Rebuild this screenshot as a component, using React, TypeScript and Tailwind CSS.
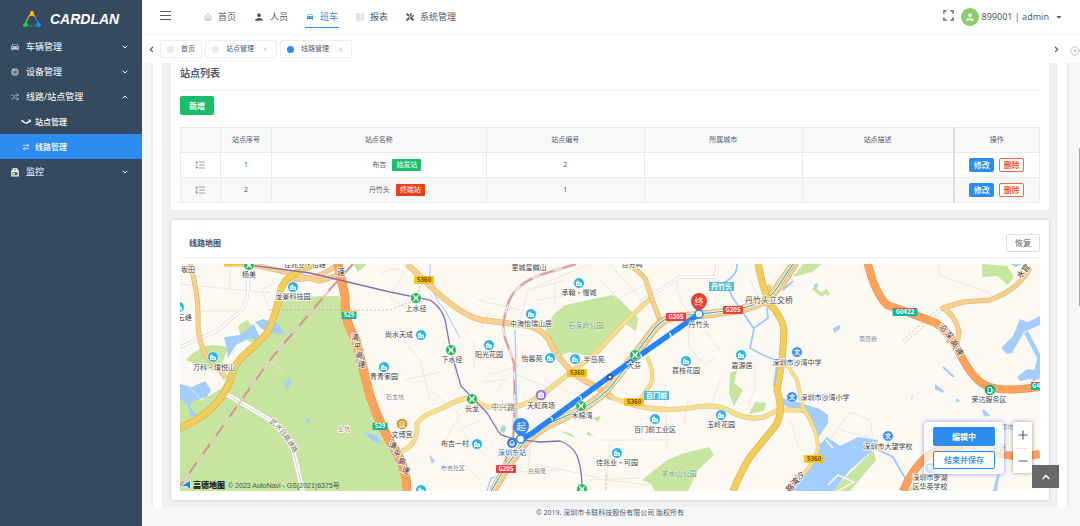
import React from "react";
import { Cpu, House, Shuffle, ArrowRightLeft, ChevronDown, ChevronUp, ChevronLeft, ChevronRight, Plus, Minus, X, CircleX } from "lucide-react";
import { IoMdCar, IoMdPerson } from "react-icons/io";
import { FaTools, FaCaretDown } from "react-icons/fa";

type Point = [number, number];

function Logo() {
  return (
    <svg viewBox="0 0 20 18" className="h-[18px] w-5" fill="none">
      <path d="M10 2 7 6 3 14" stroke="#e8a90c" strokeWidth="1.3" />
      <path d="M10 2 13 7" stroke="#e8a90c" strokeWidth="1.3" />
      <path d="M13 7 17 14" stroke="#1b8df0" strokeWidth="1.3" />
      <path d="M3 14 6 9" stroke="#1fc35b" strokeWidth="1.2" />
      <path d="M5 16H15" stroke="#28b8a0" strokeWidth=".800" strokeDasharray="2 1" />
      <circle cx="10" cy="2.500" r="1.700" fill="#f3b70e" />
      <path d="M8.500 3h3l.5 3h-4z" fill="#f3b70e" />
      <circle cx="3" cy="15" r="2" fill="#19cf55" />
      <path d="m3 17 3.500-2.500L4.500 12.500z" fill="#19cf55" />
      <circle cx="17" cy="15" r="2" fill="#1590ff" />
      <path d="m17 17-3.500-2.500 2-2z" fill="#1590ff" />
    </svg>
  );
}

function StationIcon() {
  return (
    <svg viewBox="0 0 10 6" className="h-1.5 w-2.5" fill="none" stroke="currentColor" strokeWidth="1.500">
      <path d="M.5 1.300 3.500 3.500Q5 4.500 6.500 3.600L9.500 1.500" />
      <path d="m7.500.800 2 .4-.5 2" strokeWidth="1" />
    </svg>
  );
}

function MonitorIcon() {
  return (
    <svg viewBox="0 0 16 16" className="size-2.5" fill="currentColor">
      <path d="M4 5V2h8v3h2v10H2V5zm2-1v1h4V4zM4 8v5h8V8z" />
      <path d="M5 9h3v3H5zM9 9h2v1H9z" />
    </svg>
  );
}

function ReportIcon() {
  return (
    <svg viewBox="0 0 8 8" className="size-2" fill="none" stroke="#c5c8ce" strokeWidth=".700">
      <path d="M.5.700h7v6.600h-7zM.5 2.900h7M.5 5.100h7M2.800.700v6.600" />
    </svg>
  );
}

function SortIcon() {
  return (
    <svg viewBox="0 0 10 8" className="mx-auto h-2 w-2.5 -translate-x-px" fill="none" stroke="#808695" strokeWidth=".800">
      <path d="M1.800.800v6.400M.4 2 1.800.600 3.200 2M.4 6 1.800 7.400 3.200 6M4 1H10M4 4H10M4 7H10" />
    </svg>
  );
}

function FullscreenIcon() {
  return (
    <svg viewBox="0 0 12 12" className="h-[11px] w-[11px]" fill="none" stroke="currentColor" strokeWidth="1.500">
      <path d="M1 4V1h3M8 1h3v3M11 8v3H8M4 11H1V8" />
    </svg>
  );
}

type MenuItem = { label: string; icon: React.ReactNode; open?: boolean };

function MenuRow({ label, icon, open }: MenuItem) {
  return (
    <button type="button" aria-expanded={!!open} className="flex h-[25px] w-full items-center pr-[13px] pl-2.5 text-left text-[9px]">
      <span className="flex w-4 shrink-0">{icon}</span>
      <span className="flex-1">{label}</span>
      {open ? <ChevronUp className="size-2" strokeWidth={3} /> : <ChevronDown className="size-2" strokeWidth={3} />}
    </button>
  );
}

function Sidebar() {
  return (
    <aside className="w-[142px] shrink-0 bg-[#364a5f] text-white">
      <div className="flex h-[34px] items-center gap-2 pt-1 pl-[22px]">
        <Logo />
        <span className="font-['Liberation_Sans',sans-serif] text-[14px] font-bold italic">CARDLAN</span>
      </div>
      <nav>
        <MenuRow label="车辆管理" icon={<IoMdCar className="size-2.5 text-white/75" />} />
        <MenuRow label="设备管理" icon={<Cpu className="size-2.5 p-px text-white/75" />} />
        <MenuRow label="线路/站点管理" icon={<Shuffle className="size-2.5 p-px text-white/75" />} open />
        <a href="#stations" className="flex h-[25px] items-center gap-1 pl-[21px] text-[8px] font-medium">
          <StationIcon />
          站点管理
        </a>
        <a href="#lines" aria-current="page" className="flex h-[25px] items-center gap-1 bg-[#2d8cf0] pl-[21px] text-[8px] font-medium">
          <ArrowRightLeft className="size-2.5 p-px" />
          线路管理
        </a>
        <MenuRow label="监控" icon={<MonitorIcon />} />
      </nav>
    </aside>
  );
}

function Header() {
  const items = [
    { label: "首页", icon: <House className="size-2 text-[#808695]" strokeWidth={1.5} /> },
    { label: "人员", icon: <IoMdPerson className="size-2.5" /> },
    { label: "班车", icon: <IoMdCar className="size-2" />, active: true },
    { label: "报表", icon: <ReportIcon /> },
    { label: "系统管理", icon: <FaTools className="size-2" /> },
  ];
  return (
    <header className="flex h-[35px] items-center border-b border-[#f5f5f6] pr-[17px] pl-[18px]">
      <button type="button" aria-label="折叠菜单" className="-mt-1 flex w-[11px] flex-col gap-[3px]">
        <span className="h-px bg-[#515a6e]" />
        <span className="h-px bg-[#515a6e]" />
        <span className="h-px bg-[#515a6e]" />
      </button>
      <nav className="ml-8 flex gap-4 text-[9px]">
        {items.map((item) => (
          <a
            key={item.label}
            href="#nav"
            className={item.active ? "flex h-[22px] items-center gap-1.5 border-b border-[#2d8cf0] px-px text-[#2d8cf0]" : "flex h-[22px] items-center gap-1.5 border-b border-transparent px-px"}
          >
            {item.icon}
            {item.label}
          </a>
        ))}
      </nav>
      <div className="ml-auto flex items-center gap-[7px]">
        <button type="button" aria-label="全屏" className="-mt-1"><FullscreenIcon /></button>
        <button type="button" className="flex items-center gap-[3px] text-[9px]">
          <span className="flex size-[18px] items-center justify-center rounded-full bg-[#87d068] text-white">
            <IoMdPerson className="size-2.5" />
          </span>
          <span className="font-['Noto_Sans',sans-serif]">899001 | admin</span>
          <FaCaretDown className="ml-[3px] size-2" />
        </button>
      </div>
    </header>
  );
}

function PageTabs() {
  const tabs = [
    { label: "首页" },
    { label: "站点管理", closable: true },
    { label: "线路管理", closable: true, active: true },
  ];
  return (
    <div className="flex h-7 items-center text-[7px]">
      <button type="button" aria-label="向左" className="flex w-[18px] justify-center"><ChevronLeft className="size-[9px]" strokeWidth={3} /></button>
      <div className="flex flex-1 gap-[3px]">
        {tabs.map((tab) => (
          <div key={tab.label} className="flex h-[18px] items-center gap-[7px] rounded-xs border border-[#eeeff1] px-1.5">
            <span className={tab.active ? "size-[7px] rounded-full bg-[#2d8cf0]" : "size-[7px] rounded-full bg-[#e8eaec]"} />
            <a href="#tab">{tab.label}</a>
            {tab.closable && (
              <button type="button" aria-label={"关闭" + tab.label} className="px-px text-[#a0a4ac]"><X className="size-[7px]" strokeWidth={2} /></button>
            )}
          </div>
        ))}
      </div>
      <button type="button" aria-label="向右" className="flex w-5 justify-center"><ChevronRight className="size-[9px]" strokeWidth={3} /></button>
      <button type="button" aria-label="关闭标签" className="ml-1 text-[#9aa0ab]"><CircleX className="mt-1 size-[10px]" strokeWidth={1.5} /></button>
    </div>
  );
}

const stations = [
  { order: 1, name: "布吉", tag: "始发站", first: true, code: "2" },
  { order: 2, name: "丹竹头", tag: "终端站", first: false, code: "1" },
];

function StationList() {
  return (
    <section className="bg-white px-[9px] pb-[7px]">
      <h2 className="flex h-7 items-center border-b border-[#eeeff1] pb-1.5 text-[10px] font-bold text-[#515a6e]">站点列表</h2>
      <button type="button" className="mt-[5px] flex h-[19px] items-center rounded-xs bg-[#19be6b] px-[9px] text-[8px] font-bold text-white">新增</button>
      <table className="mt-3 w-full table-fixed border-collapse text-center text-[7px]">
        <colgroup>
          <col className="w-10" />
          <col className="w-[51px]" />
          <col className="w-[25%]" />
          <col className="w-[158px]" />
          <col className="w-[158px]" />
          <col />
          <col className="w-[86px]" />
        </colgroup>
        <thead>
          <tr className="h-[25px] bg-[#f8f8f9]">
            {["", "站点序号", "站点名称", "站点编号", "所属城市", "站点描述", "操作"].map((title, i) => (
              <th key={i} className={i === 6 ? "border border-l-2 border-[#e8eaec] border-l-[#dcdee2] p-0 font-normal" : "border border-[#e8eaec] p-0 font-normal"}>{title}</th>
            ))}
          </tr>
        </thead>
        <tbody>
          {stations.map((s) => (
            <tr key={s.order} className="h-[25px] even:bg-[#f8f8f9]">
              <td className="border border-[#e8eaec] p-0"><SortIcon /></td>
              <td className="border border-[#e8eaec] p-0">{s.order}</td>
              <td className="border border-[#e8eaec] p-0">
                <div className="flex items-center justify-center gap-1.5 pl-9">
                  <span>{s.name}</span>
                  <span className={s.first ? "flex h-3 items-center rounded-[1px] bg-[#19be6b] px-1 text-white" : "flex h-3 items-center rounded-[1px] bg-[#ed4014] px-1 text-white"}>{s.tag}</span>
                </div>
              </td>
              <td className="border border-[#e8eaec] p-0">{s.code}</td>
              <td className="border border-[#e8eaec] p-0" />
              <td className="border border-[#e8eaec] p-0" />
              <td className="border border-l-2 border-[#e8eaec] border-l-[#dcdee2] p-0">
                <div className="flex justify-center gap-[5px] text-[8px] font-medium">
                  <button type="button" className="h-3.5 w-[25px] rounded-[2px] bg-[#2d8cf0] text-white">修改</button>
                  <button type="button" className="h-3.5 w-[25px] rounded-[2px] border border-[#f0694a] bg-white text-[#ed4014]">删除</button>
                </div>
              </td>
            </tr>
          ))}
        </tbody>
      </table>
    </section>
  );
}

function Road({ d, color, edge, width }: { d: string; color: string; edge: string; width: number }) {
  return (
    <>
      <path d={d} stroke={edge} strokeWidth={width + 1} fill="none" strokeLinejoin="round" />
      <path d={d} stroke={color} strokeWidth={width} fill="none" strokeLinejoin="round" />
    </>
  );
}

const residences: Point[] = [[293, 287], [213, 357], [421, 335], [384, 367], [489, 345], [531, 314], [579, 283], [550, 358], [575, 359], [686, 361], [741, 355], [655, 419], [721, 415], [477, 444], [617, 453], [421, 490], [179, 307]];
const metros: Point[] = [[249, 265], [416, 298], [451, 350], [472, 399], [581, 406], [582, 489], [635, 355]];
const schools: Point[] = [[797, 352], [792, 397], [888, 436], [930, 468]];

const places: [string, number, number][] = [
  ["坂田", 188, 272], ["杨美", 249, 277], ["佳兆业·怡峰", 305, 267], ["龙景科技园", 293, 299], ["云峰", 185, 320], ["万科·璞悦山", 214, 370],
  ["上水径", 416, 311], ["尚水天成", 399, 337], ["青青家园", 384, 379], ["下水径", 452, 362], ["阳光花园", 489, 357], ["里城玺樾山", 529, 270],
  ["中海怡瑞山居", 531, 326], ["承翰·慢城", 579, 295], ["怡馨苑", 532, 361], ["半岛苑", 594, 362], ["长龙", 472, 411], ["天虹商场", 541, 408],
  ["木棉湾", 582, 418], ["文博宫", 402, 437], ["布吉一村", 455, 446], ["荔枝花园", 686, 373], ["嘉源居", 742, 368],
  ["深圳市沙湾中学", 797, 365], ["深圳市沙湾小学", 825, 400], ["百门前工业区", 655, 432], ["玉岭花园", 721, 427], ["佳兆业·可园", 617, 465],
  ["丹竹头", 699, 327], ["大芬", 634, 368], ["荣达服务区", 989, 402], ["深圳市大望学校", 888, 449], ["深圳市罗湖", 930, 480], ["区华英学校", 930, 489], ["百分鸭", 632, 267],
];

const areas: [string, number, number][] = [["石龙坑", 395, 399], ["布吉社区", 453, 470], ["白鸽笼", 537, 473], ["窑坑", 344, 431], ["南蔚寮", 868, 341]];

const shields: [string, number, number, string, string][] = [
  ["S360", 424, 280, "#fcc21c", "#5c4a12"], ["S360", 577, 373, "#fcc21c", "#5c4a12"], ["S360", 634, 402, "#fcc21c", "#5c4a12"], ["S360", 814, 459, "#fcc21c", "#5c4a12"],
  ["S29", 349, 315, "#12b69a", "#ffffff"], ["S29", 380, 426, "#12b69a", "#ffffff"], ["G205", 676, 317, "#f23d3d", "#ffffff"], ["G205", 733, 310, "#f23d3d", "#ffffff"],
  ["G205", 506, 469, "#f23d3d", "#ffffff"], ["G0422", 905, 312, "#12b69a", "#ffffff"], ["G4", 1036, 386, "#12b69a", "#ffffff"],
];

const turned: [string, number, number, number][] = [
  ["清", 355, 340, 5], ["平", 357, 349, 5], ["高", 359, 358, 10], ["速", 361, 367, 15],
  ["清", 392, 448, 20], ["平", 396, 456, 20], ["高", 401, 464, 20], ["速", 405, 473, 20], ["速", 341, 275, 0],
  ["沿", 941, 330, 40], ["深", 947, 337, 45], ["高", 952, 345, 55], ["速", 957, 353, 60], ["水", 1023, 276, -50], ["官", 1028, 270, -50],
  ["沙", 802, 478, -45], ["湾", 797, 484, -45], ["路", 792, 490, -45],
];

const ridgeRoad: [string, number, number, number][] = [
  ["武", 272, 424, 40], ["水", 277, 429, 45], ["日", 281, 434, 50], ["高", 285, 439, 55], ["速", 289, 445, 60], ["路", 292, 450, 65],
];

const light = "#f5dd94";
const tan = "#f7cf8f";

function RouteMap() {
  return (
    <svg
      viewBox="180 264 860 227"
      preserveAspectRatio="xMidYMid slice"
      className="block h-[227px] w-full font-['Noto_Sans_CJK_SC',sans-serif]"
      role="img"
      aria-label="线路地图"
    >
      <rect x="0" y="200" width="1300" height="400" fill="#fcf9f2" />
      <g fill="#c8e59f">
        <path d="M283 297 339 296 345 328 360 358 375 412 390 446 402 470V491H180V394L202 400 222 388 234 362 262 342 276 322z" />
        <path d="M186 360Q205 338 228 348L221 366 235 362 216 372z" />
        <path d="M238 326 247 320 255 328 262 342 250 342 241 337z" />
        <path d="M349 260H370L365 266 358 272 355 267z" />
        <path d="M565 305 612 295 620 299 638 319 636 331 624 323 604 341 592 357 570 352 553 358 545 332 553 315z" />
        <path d="M709 447 714 455 698 470 688 491H655L651 484 642 480 667 460 682 454z" />
        <path d="M730 373 737 370 734 383 743 390 734 406 729 393z" />
        <path d="M755 402 766 403 764 411 749 414z" />
        <path d="M793 277 803 264H822L812 272z" />
        <path d="M982 264 1007 266 1014 277 1008 285 997 276 982 277z" />
        <path d="M873 450 876 460 850 491H832z" />
        <path d="M560 431 570 433 576 438 566 434zM592 418 601 416 598 422zM587 431 594 436 587 435z" />
        <path d="M902 491 922 482 920 491zM500 427h4v6h-4z" />
      </g>
      <path d="M813 288 822 295 826 291 829 295" fill="none" stroke="#c8e59f" strokeWidth="3" />
      <g fill="#a3cdff">
        <path d="M255 322 263 319 278 324 285 334 270 333 262 329zM224 337 240 335 254 324 261 340 258 342 250 338 236 345 228 358 226 345z" />
        <path d="M180 384 192 387 205 381 211 390 207 397 193 401 190 406 196 415 191 417 187 404 180 399z" />
        <path d="M362 431 377 436 381 444 374 442zM306 418 311 419 307 425zM281 379 285 383 289 378 292 384 287 389 284 383z" />
        <path d="M429 454 435 461 432 464zM502 425 506 427 505 432 501 430zM813 285 818 283 817 289zM833 328 840 325V329L834 333z" />
        <path d="M781 398 800 403 820 409 828 415 828 423 818 438 810 416 783 405z" />
        <path d="M840 446 858 437 878 440 872 451 850 470 833 491H788L804 476 815 462 818 446 827 437z" />
        <path d="M1001 348 1013 336 1020 319 1028 322 1040 316V325L1024 332 1012 353 1007 354z" />
        <path d="M1028 331 1040 354V378L1032 382 1037 358 1024 333z" />
        <path d="M1017 377 1027 369 1040 371V377L1020 381zM1010 264H1022L1016 267zM935 384 944 391 943 393 935 389zM956 398 961 401 956 402zM982 410 987 415 984 417zM996 478 1000 471 997 491 993 491z" />
        <path d="M832 336 840 333M911 398 913 395 912 400z" />
      </g>
      <g fill="none" stroke="#9dc9ff" strokeWidth="1.800">
        <path d="M737 264Q738 275 725 282L733 298 754 329 750 348 765 356 778 361M754 328 768 318 767 308M793 281 783 290M777 365 774 385 779 397" />
        <path d="M430 264V278Q434 300 445 310L460 338" strokeWidth="1" />
        <path d="M515 330 517 420M487 491 491 478 500 476" strokeWidth="1.200" />
        <path d="M878 450 893 457 902 473 906 479M943 367 954 377M983 410 989 416" />
      </g>
      <path d="M828 485 838 475 854 482 838 491M826 440 833 448" fill="none" stroke="#fcf9f2" strokeWidth="1.500" />

      <g fill="none" stroke="#e9e5df" strokeWidth=".900">
        <path d="M180 284 270 293M230 264V286M196 311 245 311M270 310 262 290 300 268M182 380 200 398M270 360 283 372" />
        <path d="M380 275Q394 264 404 272L390 298 406 308M404 380 440 372M395 330 420 360 430 398M430 390 460 415 440 450M460 460 480 480" />
        <path d="M478 300 520 310M474 340V370M490 375 520 365M483 382 505 379 495 395M490 310 480 330M530 290 565 280M517 330 528 290 590 264M536 300 566 296" />
        <path d="M517 345V375L555 390M545 380 575 395M600 280 640 320M610 264 650 310M615 300 650 282M555 305V283" />
        <path d="M677 278Q676 300 690 314L688 345 704 365 716 357M705 330 720 350M715 264V290M760 300 750 280M665 385 667 450M600 440H668M610 445 607 480 650 485" />
        <path d="M688 400 684 425M720 380 710 408M740 372 755 365V390L748 405M830 440 850 412 870 420 874 445M840 430 870 438M939 265V275L990 293 995 300" />
        <path d="M590 480 640 478M540 465 600 478M490 460 460 430 480 420M530 445 528 475M560 470 500 473M606 470V491M800 450 790 420" />
      </g>
      <g fill="none" strokeWidth=".800" stroke="#b5b0aa" strokeDasharray="2 2">
        <path d="M270 310H390L415 300 423 280M905 343 942 310M903 340 940 307M606 475V491" />
      </g>

      <Road d="M717 264 716 277H680L655 293 640 302" color="#fff" edge="#d8d4cf" width={2} />
      <Road d="M248 278V290Q247 308 235 316L217 331 180 347" color="#fff" edge="#d8d4cf" width={2} />
      <Road d="M223 392 270 420Q286 434 293 450L303 491" color="#fff" edge="#d8d0c8" width={4} />
      <path d="M223 392 270 420Q286 434 293 450L303 491" fill="none" stroke="#d8d0c8" />
      <Road d="M425 278 433 296M455 365 460 390" color="#fff" edge="#d8d4cf" width={2} />

      <path d="M353 264 332 287 270 360 180 486" fill="none" stroke="#c9b7b5" strokeWidth="2" />
      <path d="M353 264 332 287 270 360 180 486" fill="none" stroke="#f0d9d0" strokeWidth="1.300" />
      <path d="M353 264 332 287 270 360 180 486" fill="none" stroke="#d99090" strokeWidth="1.800" strokeDasharray="13 10" />

      <Road d="M190 264Q199 294 198 322 198 352 217 367L226 378" color={tan} edge="#ddb067" width={4} />
      <Road d="M224 264H250L285 272 320 281 342 274M290 280Q320 280 338 264" color={tan} edge="#ddb067" width={4} />
      <path d="M224 264H249" stroke="#fcc21c" strokeWidth="3" />
      <Road d="M322 262Q286 273 281 289 276 316 267 333 256 345 245 354 233 364 230 382 216 413 180 428" color="#f0cd5c" edge="#d6a938" width={6} />
      <Road d="M338 264 345 296Q344 322 356 340L370 396Q382 430 397 453 407 470 407 491" color="#ffa35c" edge="#e88c49" width={8} />

      <Road d="M652 297 623 324 597 352 547 391Q530 405 512 407L487 407Q479 404 472 397 456 400 443 408 420 416 417 424 418 446 400 452" color={light} edge="#e3c36c" width={4} />
      <Road d="M647 357Q655 372 651 384L641 398 633 404" color={light} edge="#e3c36c" width={3} />
      <Road d="M607 396 633 405Q663 412 690 408 715 403 730 411 747 421 764 417L778 410H803" color={light} edge="#e3c36c" width={4} />
      <Road d="M787 365 797 380 803 408Q818 430 818 448 815 466 787 491" color={light} edge="#e3c36c" width={3} />
      <Road d="M630 264 645 278 653 302 660 320" color={tan} edge="#ddb067" width={4} />
      <Road d="M407 264 424 280Q460 316 482 320L530 326Q547 332 552 346 568 374 593 385L612 397" color={tan} edge="#ddb067" width={5} />

      <path d="M576 264 540 275Q511 286 507 308 501 325 505 338L514 363 515 403 513 440 503 467 492 491" fill="none" stroke="#bda8a6" strokeWidth="2.500" />
      <path d="M576 264 540 275Q511 286 507 308 501 325 505 338L514 363 515 403 513 440 503 467 492 491" fill="none" stroke="#fbe9e6" strokeWidth="1.700" />
      <path d="M576 264 540 275Q511 286 507 308 501 325 505 338L514 363 515 403 513 440 503 467 492 491" fill="none" stroke="#db8c8c" strokeWidth="1.300" strokeDasharray="14 9" />

      <Road d="M800 255 777 288Q769 302 747 308 725 313 687 316 667 315 655 328L637 352 613 382Q603 397 580 410L545 427Q529 437 522 447L507 467 493 491" color={tan} edge="#dca55d" width={7} />
      <Road d="M797 264 783 286 767 300M770 285 763 302 777 312" color={tan} edge="#dca55d" width={3} />
      <path d="M793 264 777 288Q769 301 747 307 725 312 687 315 667 314 655 328L637 352 613 384Q603 397 580 410L545 425Q529 435 522 445L507 465 491 491" fill="none" stroke="#fff" strokeWidth="2.500" />
      <path d="M793 264 777 288Q769 301 747 307 725 312 687 315 667 314 655 328L637 352 613 384Q603 397 580 410L545 425Q529 435 522 445L507 465 491 491" fill="none" stroke="#3fa9b8" strokeWidth="1.200" />
      <Road d="M758 264 763 285Q767 301 775 310 784 322 784 332L782 362 777 390Q784 412 776 425L750 457Q740 473 733 491" color="#f0cd5c" edge="#d6a938" width={6} />

      <path d="M250 265 310 273 390 292 430 300Q444 309 446 325L451 352 461 386 487 413 500 434Q508 439 540 442L560 441Q576 447 579 462 582 472 582 491" fill="none" stroke="#8c6bbb" strokeWidth="1.300" />

      <Road d="M1030 268Q1018 290 990 300L963 302 943 308Q956 316 959 332L957 345 947 340" color={tan} edge="#ddb067" width={4} />
      <Road d="M867 260Q874 292 887 305L910 313 936 323Q950 333 959 352 974 383 990 387 1005 392 1040 387" color="#ffa35c" edge="#e88c49" width={7} />
      <Road d="M903 491Q917 459 938 450 968 441 997 453 1020 459 1040 454" color="#ffa35c" edge="#e88c49" width={7} />

      <path d="M699 314 609 377 531 434 521 439" fill="none" stroke="#2484fb" strokeWidth="5.500" strokeLinecap="round" />
      <path d="m669 333 2 2-.5 2.500M639 354l2.500 1.500-.5 2.500M579 396l2.500 1.500-.5 2.500M550 417l2.500 1.500-.5 2.500" fill="none" stroke="#fff" strokeWidth="1.100" />
      <circle cx="610" cy="377" r="2.300" fill="#dceaff" stroke="#234d85" strokeWidth="1.400" />

      {residences.map(([x, y]) => (
        <g key={x + "-" + y} transform={"translate(" + x + " " + y + ")"}>
          <circle r="5.300" fill="#2cb3ea" stroke="#fff" strokeWidth=".500" />
          <path d="M-3 3V-1L-.5-3V-1L3 0V3z" fill="#fff" />
          <path d="M-1.700-.5V2.200M0 .5V2.200M1.600 .8V2.200" stroke="#2cb3ea" strokeWidth=".700" />
        </g>
      ))}
      {metros.map(([x, y]) => (
        <g key={x + "-" + y} transform={"translate(" + x + " " + y + ")"}>
          <circle r="5.300" fill="#27b65a" stroke="#fff" strokeWidth=".500" />
          <path d="M-2.600-3Q.6 0-2.600 3M2.600-3Q-.6 0 2.600 3M0-1.500V1.500" stroke="#fff" strokeWidth="1.200" fill="none" />
        </g>
      ))}
      {schools.map(([x, y]) => (
        <g key={x + "-" + y}>
          <circle cx={x} cy={y} r="5.300" fill="#3d94f3" stroke="#fff" strokeWidth=".500" />
          <text x={x} y={y + 2} fontSize="6" fontWeight="700" textAnchor="middle" fill="#fff">文</text>
        </g>
      ))}
      <circle cx="402" cy="424" r="5.300" fill="#e0941d" />
      <path d="M399 423 402 421 405 423M399 427H405M400 423V427M402 423V427M404 423V427" stroke="#fff" strokeWidth=".900" fill="none" />
      <circle cx="541" cy="395" r="5.300" fill="#9575e8" />
      <path d="M538.500 393.500H543.500V397.500H538.500zM539.500 393.500Q541 390 542.500 393.500" stroke="#fff" strokeWidth=".900" fill="#fff" fillOpacity=".7" />
      <circle cx="990" cy="390" r="5.300" fill="#12a77f" />
      <path d="M988 387.500H991.500V392.500H988zM987 393H993M991.500 389.500H993V392" fill="none" stroke="#fff" strokeWidth=".900" />
      <circle cx="512" cy="443" r="5" fill="#3578e5" />
      <path d="M510 445V442L512 440 514 442V445zM512 443V446" fill="none" stroke="#fff" strokeWidth="1" />

      <g textAnchor="middle" paintOrder="stroke" stroke="#fff" strokeWidth="1.500" strokeLinejoin="round">
        <g fontSize="7" fill="#3f3f42">
          {places.map(([name, x, y]) => <text key={name} x={x} y={y}>{name}</text>)}
        </g>
        <g fontSize="6" fill="#88827c">
          {areas.map(([name, x, y]) => <text key={name} x={x} y={y}>{name}</text>)}
        </g>
        <g fontSize="8" fontWeight="500" fill="#6b4a36">
          {turned.map(([char, x, y, angle], i) => <text key={i} transform={"translate(" + x + " " + y + ") rotate(" + angle + ")"}>{char}</text>)}
        </g>
        <g fontSize="7" fill="#7c6d5e">
          {ridgeRoad.map(([char, x, y, angle], i) => <text key={i} transform={"translate(" + x + " " + y + ") rotate(" + angle + ")"}>{char}</text>)}
        </g>
        <text x="769" y="303" fontSize="8" fill="#3f3f42">丹竹头立交桥</text>
        <text x="503" y="410" fontSize="8" fill="#7c6845">中兴路</text>
        <text x="512" y="455" fontSize="7" fill="#2c64b0">深圳东站</text>
        <text x="586" y="328" fontSize="7" fill="#5f9a63" strokeWidth=".500">石芽岭公园</text>
        <text x="679" y="476" fontSize="7" fill="#5f9a63" strokeWidth=".500">求水山公园</text>
        <text x="985" y="450" fontSize="7" fill="#88827c">东部过境高速</text>
        <text x="1010" y="429" fontSize="6" fill="#88827c">南坑村</text>
      </g>

      {shields.map(([code, x, y, fill, color]) => (
        <g key={code + x}>
          <rect x={x - code.length * 2.5} y={y - 4} width={code.length * 5} height="8" rx="1" fill={fill} />
          <text x={x} y={y + 2} fontSize="6" fontWeight="700" textAnchor="middle" fill={color}>{code}</text>
        </g>
      ))}
      <path d="M341 311.500H357M372 422.500H388" stroke="#f6c31c" strokeWidth="1" />
      <path d="M893 308.500H917M1031 382.500H1040" stroke="#ea4b42" strokeWidth="1" />
      <rect x="709" y="282" width="25" height="9" fill="#50c0d0" />
      <text x="721.500" y="289" fontSize="7" fontWeight="700" textAnchor="middle" fill="#fff">丹竹头</text>
      <rect x="644" y="391" width="25" height="9" fill="#50c0d0" />
      <text x="656.500" y="398" fontSize="7" fontWeight="700" textAnchor="middle" fill="#fff">百门前</text>

      <path d="M699 314C697 309 691 307 691 301A8 8 0 0 1 707 301C707 307 701 309 699 314z" fill="#f03b2e" />
      <text x="699" y="304.500" fontSize="9" textAnchor="middle" fill="#fff">终</text>
      <path d="M521 439C519 434 513 432 513 426A8 8 0 0 1 529 426C529 432 523 434 521 439z" fill="#3787f0" />
      <text x="521" y="430" fontSize="9" textAnchor="middle" fill="#fff">起</text>
      <circle cx="699" cy="314" r="4" fill="#fff" stroke="#2484fb" strokeWidth="1.500" />
      <circle cx="520.500" cy="439" r="4" fill="#fff" stroke="#2484fb" strokeWidth="1.500" />

      <path d="M182 486 190 481V489L187 486z" fill="#0a7cff" stroke="#fff" strokeWidth="1" paintOrder="stroke" />
      <text x="193" y="488" fontSize="8" fontWeight="900" fill="#1d2320">高德地图</text>
      <text x="228" y="488" fontSize="7" fill="#4c5648" className="font-['Liberation_Sans','Noto_Sans_CJK_SC',sans-serif]">© 2023 AutoNavi - GS(2021)6375号</text>
    </svg>
  );
}

function MapCard() {
  return (
    <section className="mt-2.5 rounded-xs bg-white px-[9px] pb-[9px] shadow-[0_0_3px_rgba(0,0,0,0.22)]">
      <div className="flex h-[38px] items-center justify-between border-b border-[#f2f3f5] pt-[9px] pb-px pl-[9px]">
        <h2 className="text-[8px] font-bold text-[#464c5b]">线路地图</h2>
        <button type="button" className="h-[18px] w-[34px] rounded-[2px] border border-[#dcdee2] text-[8px]">恢复</button>
      </div>
      <div className="relative mt-1.5">
        <RouteMap />
        <div className="absolute right-9 bottom-[17px] flex w-20 flex-col gap-[5px] rounded-[2px] bg-white/70 px-[9px] py-[5px] text-[8px] shadow-[0_0_4px_rgba(90,90,240,0.65)]">
          <button type="button" className="h-[19px] rounded-[2px] bg-[#2d8cf0] font-bold text-white">编辑中</button>
          <button type="button" className="h-[18px] rounded-[2px] border border-[#2d8cf0] bg-white/70 font-medium text-[#2d8cf0]">结束并保存</button>
        </div>
        <div className="absolute right-2 bottom-[18px] flex w-[19px] flex-col rounded-[2px] bg-white px-1 shadow-[0_0_4px_rgba(0,0,0,0.4)]">
          <button type="button" aria-label="放大" className="flex h-[27px] items-center justify-center border-b border-[#e6e6e6]"><Plus className="size-3.5 shrink-0" strokeWidth={2} /></button>
          <button type="button" aria-label="缩小" className="flex h-6 items-center justify-center"><Minus className="size-3.5 shrink-0" strokeWidth={2} /></button>
        </div>
        <button type="button" aria-label="返回顶部" className="absolute -right-[19px] bottom-[3px] flex h-[23px] w-[27px] items-center justify-center bg-[#606060]/95 text-white">
          <ChevronUp className="size-3" strokeWidth={3} />
        </button>
      </div>
    </section>
  );
}

export default function App() {
  return (
    <div className="flex min-h-screen font-['Noto_Sans','Noto_Sans_CJK_SC',sans-serif] text-[#515a6e]">
      <Sidebar />
      <div className="flex min-w-0 flex-1 flex-col bg-white">
        <Header />
        <PageTabs />
        <main className="relative flex-1 bg-[#f5f7f9] pr-[11px] pl-[9px]">
          <div className="border-x-2 border-[#e8e9eb] border-l-[#eeeff1] bg-white px-[9px]">
            <div className="bg-[#f0f0f1] px-[9px] pb-[7px]">
              <StationList />
              <MapCard />
            </div>
          </div>
          <footer className="flex h-3 items-center justify-center text-[7px]">© 2019. 深圳市卡联科技股份有限公司 版权所有</footer>
          <div className="absolute top-[85px] right-0 h-[158px] w-px bg-[#a8a8a8]" />
        </main>
      </div>
    </div>
  );
}
